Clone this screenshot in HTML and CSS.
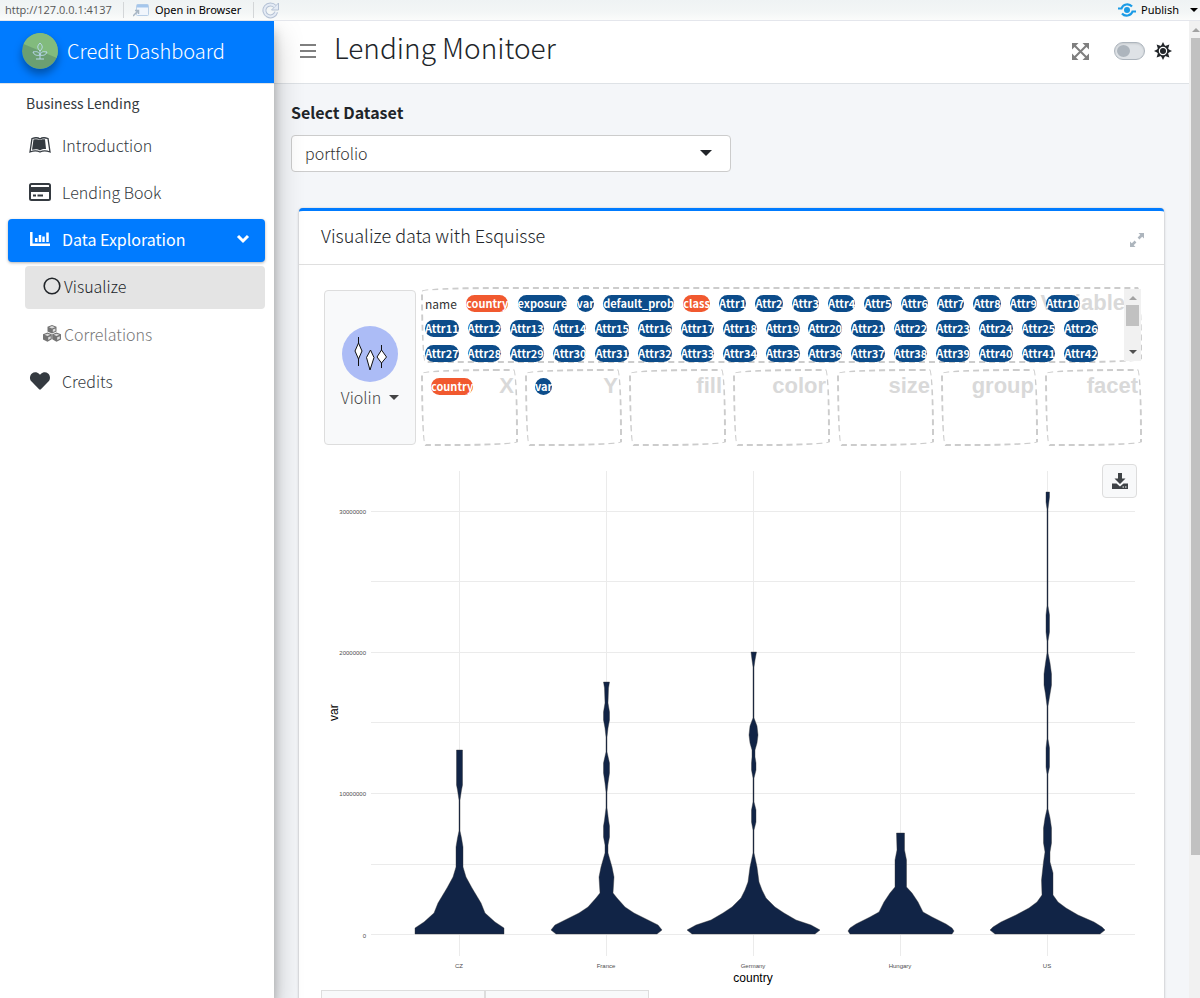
FILE: index.html
```html
<!DOCTYPE html>
<html lang="en">
<head>
<meta charset="utf-8">
<title>Credit Dashboard</title>
<link rel="stylesheet" href="styles.css">
</head>
<body>
<div class="viewer">
  <div class="viewer-bar">
    <span class="viewer-url">http://127.0.0.1:4137</span>
    <button class="viewer-btn viewer-open" type="button">
      <svg width="16" height="13" viewBox="0 0 16 13"><rect x="3.5" y=".5" width="12" height="11" rx="1" fill="#f1f6fc" stroke="#b9cfe6"/><path d="M4 2h11" stroke="#a4c6ec" stroke-width="3"/><path d="M0 12l5-5M2 6.500h3.500V10" fill="none" stroke="#a9b6c2" stroke-width="1.500"/></svg>
      Open in Browser
    </button>
    <button class="viewer-btn viewer-refresh" type="button" aria-label="Refresh">
      <svg width="17" height="17" viewBox="0 0 17 17"><path d="M13 4.500A6 6 0 1 0 14.200 10" fill="none" stroke="#b4c1d4" stroke-width="4"/><path d="M16.500 1v7h-7z" fill="#e4ebf5" stroke="#b4c1d4"/><path d="M13 4.500A6 6 0 1 0 14.200 10" fill="none" stroke="#e4ebf5" stroke-width="2"/></svg>
    </button>
    <button class="viewer-btn viewer-publish" type="button">
      <svg width="18" height="14" viewBox="0 0 18 14" fill="none" stroke="#1a9be6" stroke-width="2.200"><path d="M0 5.500h3.500C5 1 11 0 14 3.500M18 8.500h-3.500C13 13 7 14 4 10.500"/><circle cx="9" cy="7" r="3" fill="#1a9be6" stroke="none"/></svg>
      Publish
      <span class="caret caret-sm"></span>
    </button>
  </div>

  <div class="app">
    <aside class="sidebar">
      <a class="brand" href="#">
        <svg class="brand-logo" width="36" height="36" viewBox="0 0 36 36"><circle cx="18" cy="18" r="18" fill="#6b9f71"/><path d="M1.500 11A18 18 0 0 1 35 25z" fill="#82bb7d"/><g fill="none" stroke="#b9d7ea" stroke-width="1"><path d="M18 10c-3 3-3 5 0 8c3-3 3-5 0-8zM18 18v8M14 26h8M11 19c4-1 6 0 7 3c1-3 3-4 7-3c-1 3-4 4-7 3c-3 1-6 0-7-3z"/></g></svg>
        <span>Credit Dashboard</span>
      </a>
      <div class="nav-header">Business Lending</div>
      <nav class="nav">
        <a class="nav-link" href="#"><svg class="nav-icon" width="22" height="16" viewBox="0 0 22 16"><path d="M3 1.500C6 .5 9 .5 11 2c2-1.500 5-1.500 8-.5L21 15c-4-1.500-7-1.500-10 0c-3-1.500-6-1.500-10 0z" fill="#fff" stroke="#343a40" stroke-width="1.300"/><path d="M4.500 2.500C7 2 9 2 11 3c2-1 3-1 5-.7L17 12c-2-.2-4 0-6 1.500C9 12 6 12 3 12.800z" fill="#343a40"/></svg><span>Introduction</span></a>
        <a class="nav-link" href="#"><svg class="nav-icon" width="22" height="18" viewBox="0 0 22 18"><rect x="1" y="1" width="20" height="16" rx="1.500" fill="#fff" stroke="#343a40" stroke-width="2"/><path d="M1 4h20v5H1z" fill="#343a40"/><path d="M4 12.500h3M8.500 12.500H14" stroke="#343a40" stroke-width="2"/></svg><span>Lending Book</span></a>
        <a class="nav-link active" href="#"><svg class="nav-icon" width="20" height="16" viewBox="0 0 20 16" fill="none" stroke="#fff" stroke-width="2.500"><path d="M1.300 1v12.700H20"/><path d="M6.300 7v4M10 4v7M13.500 5.500V11M17.500 1.500V11"/></svg><span>Data Exploration</span><svg class="nav-chevron" width="14" height="10" viewBox="0 0 14 10"><path d="M2 2l5 5 5-5" fill="none" stroke="#fff" stroke-width="3"/></svg></a>
        <div class="subnav">
          <a class="sub-link current" href="#"><svg width="18" height="18" viewBox="0 0 18 18"><circle cx="9" cy="9" r="7.800" fill="none" stroke="#212529" stroke-width="1.600"/></svg><span>Visualize</span></a>
          <a class="sub-link" href="#"><svg width="18" height="17" viewBox="0 0 18 17"><path fill="#747474" d="M9 0l4.500 1.700v4.800L9 8.600 4.500 6.500V1.700zM4.500 7.500L8.800 9.300v5L4.500 16.700 0 14.500V9.300zM13.500 7.500L18 9.300v5.200l-4.500 2.200-4.300-2.400v-5z"/><path fill="#fff" d="M9 1l3 1.200L9 3.400 6 2.200zM4.500 8.700l2.800 1.100-2.800 1.200-2.900-1.200zM13.500 8.700l2.900 1.100-2.900 1.200-2.800-1.200zM9.800 4.500l2.600-1v2.400L9.800 7zM5.200 12.200l2.500-1v2.300l-2.500 1.400zM14.200 12.200l2.600-1v2.500l-2.600 1.200z" opacity=".75"/></svg><span>Correlations</span></a>
        </div>
        <a class="nav-link" href="#"><svg class="nav-icon" width="20" height="20" viewBox="0 0 512 512"><path fill="#343a40" d="M462.300 62.600C407.500 15.900 326 24.300 275.700 76.200L256 96.500l-19.700-20.300C186.100 24.300 104.500 15.900 49.700 62.600c-62.800 53.600-66.100 149.800-9.900 207.900l193.500 199.800c12.500 12.900 32.800 12.900 45.300 0l193.500-199.800c56.300-58.100 53-154.300-9.800-207.900z"/></svg><span>Credits</span></a>
      </nav>
    </aside>

    <div class="page">
      <header class="topbar">
        <button class="icon-btn" type="button" aria-label="Toggle menu"><svg width="16" height="14" viewBox="0 0 16 14"><path d="M0 1h16M0 7h16M0 13h16" stroke="#7f7f7f" stroke-width="2"/></svg></button>
        <h1>Lending Monitoer</h1>
        <button class="icon-btn push" type="button" aria-label="Full screen"><svg width="17" height="17" viewBox="0 0 17 17" fill="#7f7f7f"><path d="M0 0h6.500L0 6.500zM17 0v6.500L10.500 0zM0 17v-6.500L6.500 17zM17 17h-6.500l6.500-6.500z"/><path d="M2 2l13 13M15 2L2 15" stroke="#7f7f7f" stroke-width="2"/></svg></button>
        <label class="theme"><input class="switch" type="checkbox" aria-label="Dark mode"><svg width="18" height="18" viewBox="0 0 18 18"><g fill="#212529"><path d="M9 0l2 4H7zM9 18l-2-4h4zM0 9l4-2v4zM18 9l-4 2V7zM2.600 2.600l4.300 1.400L4 6.900zM15.400 2.600L14 6.900 11.100 4zM2.600 15.400L4 11.100 6.900 14zM15.400 15.400L11.100 14 14 11.100z"/></g><circle cx="9" cy="9" r="5" fill="none" stroke="#212529" stroke-width="1.600"/><circle cx="9" cy="9" r="3" fill="#212529"/></svg></label>
      </header>

      <main class="content">
        <label class="field-label" for="dataset">Select Dataset</label>
        <div class="select-wrap">
          <select id="dataset"><option>portfolio</option></select>
          <span class="caret"></span>
        </div>

        <section class="card">
          <div class="card-header">
            <h2>Visualize data with Esquisse</h2>
            <button class="icon-btn" type="button" aria-label="Maximize"><svg width="14" height="14" viewBox="0 0 14 14" fill="#adb5bd"><path d="M8.500 0H14v5.500zM0 8.500L5.500 14H0z"/><path d="M12 2L8.500 5.500M5.500 8.500L2 12" stroke="#adb5bd" stroke-width="2.500"/></svg></button>
          </div>
          <div class="card-body">
            <div class="builder">
              <button class="geom" type="button">
                <svg width="56" height="56" viewBox="0 0 56 56"><circle cx="28" cy="28" r="28" fill="#acbcf6"/><g fill="#fff" stroke="#111" stroke-width="1"><path d="M16.500 11v6L13 25l3.500 8v7v-7l3.500-8-3.500-8zM28.500 24l-4 7.500 3.500 12.500 4-12.500zM39.500 19v5L35 31l4.500 6v5v-5l5-6-5-7z"/></g></svg>
                <span class="geom-name">Violin <span class="caret"></span></span>
              </button>
              <div class="zones">
                <div class="zone source">
                  <span class="mark">Variable</span>
                  <div class="pills">
                    <div class="pill-row pill-row-first"><span class="plain">name</span><span class="pill cat">country</span><span class="pill">exposure</span><span class="pill">var</span><span class="pill">default_prob</span><span class="pill cat">class</span><span class="pill">Attr1</span><span class="pill">Attr2</span><span class="pill">Attr3</span><span class="pill">Attr4</span><span class="pill">Attr5</span><span class="pill">Attr6</span><span class="pill">Attr7</span><span class="pill">Attr8</span><span class="pill">Attr9</span><span class="pill">Attr10</span></div>
                    <div class="pill-row"><span class="pill">Attr11</span><span class="pill">Attr12</span><span class="pill">Attr13</span><span class="pill">Attr14</span><span class="pill">Attr15</span><span class="pill">Attr16</span><span class="pill">Attr17</span><span class="pill">Attr18</span><span class="pill">Attr19</span><span class="pill">Attr20</span><span class="pill">Attr21</span><span class="pill">Attr22</span><span class="pill">Attr23</span><span class="pill">Attr24</span><span class="pill">Attr25</span><span class="pill">Attr26</span></div>
                    <div class="pill-row"><span class="pill">Attr27</span><span class="pill">Attr28</span><span class="pill">Attr29</span><span class="pill">Attr30</span><span class="pill">Attr31</span><span class="pill">Attr32</span><span class="pill">Attr33</span><span class="pill">Attr34</span><span class="pill">Attr35</span><span class="pill">Attr36</span><span class="pill">Attr37</span><span class="pill">Attr38</span><span class="pill">Attr39</span><span class="pill">Attr40</span><span class="pill">Attr41</span><span class="pill">Attr42</span></div>
                  </div>
                  <div class="bar bar-inner"><span class="arrow-up"></span><span class="thumb"></span><span class="arrow-down"></span></div>
                </div>
                <div class="targets">
                  <div class="zone"><span class="mark">X</span><span class="pill cat">country</span></div>
                  <div class="zone"><span class="mark">Y</span><span class="pill">var</span></div>
                  <div class="zone"><span class="mark">fill</span></div>
                  <div class="zone"><span class="mark">color</span></div>
                  <div class="zone"><span class="mark">size</span></div>
                  <div class="zone"><span class="mark">group</span></div>
                  <div class="zone"><span class="mark">facet</span></div>
                </div>
              </div>
            </div>

            <div class="plot">
              <button class="download" type="button" aria-label="Download"><svg width="16" height="16" viewBox="0 0 16 16" fill="#3f4347"><path d="M6 0h4v5.500h3.500L8 11 2.500 5.500H6z"/><path d="M0 10.500h4.500L8 13.500l3.500-3H16V16H0z"/><path d="M10.500 14h1.500M13 14h1.500" stroke="#fff"/></svg></button>
              <svg class="chart" viewBox="321 463 821 527" role="img" aria-label="Violin plot of var by country">
                <g class="grid"><path d="M371 511.500H1135M371 652.500H1135M371 793.500H1135M371 934.500H1135M459.500 471V956M606.500 471V956M753.500 471V956M900.500 471V956M1047.500 471V956"/><path d="M371 581.500H1135M371 722.500H1135M371 864.500H1135"/></g>
                <g class="violins">
                  <path d="M456.500 750H462.500V785L461.500 790L460 800V831L461.500 838L463 847V867L466 877L472 888L481 903L485 913L495 922L504 928V934H415V928L424 922L434 913L438 903L447 888L453 877L456 867V847L457.500 838L459 831V800L457.500 790L456.500 785Z"/>
                  <path d="M603.500 682H609.500L608.500 688L608 703L609.500 712V720L608 728L607 737V752L609.500 763V773L608 783L607 792V808L608.500 820L609.500 826V837L608 845V853L612 867L614 877L613 893L617 898L625 907L634 913L648 920L658 925L662 930L657 934H556L551 930L555 925L565 920L579 913L588 907L596 898L600 893L599 877L601 867L605 853V845L603.500 837V826L604.500 820L606 808V792L605 783L603.500 773V763L606 752V737L605 728L603.500 720V712L605 703L604.500 688Z"/>
                  <path d="M751 652H756.500L755 660L754 667V718L757 726L758 735L757 743L755 750V757L756 763V770L754 778V802L756 810V822L754 830V853L757 867L759 882L762 890L766 898L775 907L784 913L796 920L811 925L820 930L815 934H692L687 930L696 925L711 920L723 913L732 907L741 898L745 890L748 882L750 867L753 853V830L751.500 822V810L753 802V778L751.500 770V763L752 757V750L750 743L749 735L750 726L753 718V667L752 660Z"/>
                  <path d="M896.500 833H904.500V850L906.500 860V887L912 893L918 902L923 912L932 917L946 924L952 928L954 931L952 934H850L848 931L850 928L856 924L870 917L879 912L884 902L890 893L895 887V860L897 850Z"/>
                  <path d="M1046 492H1049.500V497L1048 509V606L1049.500 615V632L1048 641V653L1050 663L1051.500 674V685L1050 694L1048 706V739L1049.500 748V767L1048 774V809L1050 818L1051.500 828V843L1050 852V862L1053 873V895L1058 902L1066 908L1078 915L1094 922L1102 927L1105 930L1100 934H995L990 930L993 927L1001 922L1016 915L1029 908L1037 902L1042 895L1041.500 880L1043.500 862L1045 852L1043.500 843V828L1045 818L1047 809V774L1046 767V748L1047 739V706L1045.500 694L1044 685V674L1045.500 663L1047 653V641L1046 632V615L1047 606V509L1046 502Z"/>
                </g>
                <g class="ticks ticks-y"><text x="366" y="514">30000000</text><text x="366" y="655">20000000</text><text x="366" y="796">10000000</text><text x="366" y="938">0</text></g>
                <g class="ticks ticks-x"><text x="459" y="968">CZ</text><text x="606" y="968">France</text><text x="753" y="968">Germany</text><text x="900" y="968">Hungary</text><text x="1047" y="968">US</text></g>
                <text class="axis" x="753" y="982">country</text>
                <text class="axis" transform="translate(338 721) rotate(-90)">var</text>
              </svg>
            </div>
            <div class="tools"><button type="button" aria-label="Labels and title"></button><button type="button" aria-label="Plot options"></button></div>
          </div>
        </section>
      </main>
    </div>
    <div class="bar bar-page"><span class="arrow-up"></span><span class="thumb"></span></div>
  </div>
</div>
</body>
</html>
```

FILE: styles.css
```css
* { box-sizing: border-box; }

body {
  margin: 0;
  color: #212529;
  font-family: "Noto Sans CJK SC", "Noto Sans", sans-serif;
  font-size: 16px;
  font-weight: 300;
  line-height: 24px;
}

button { padding: 0; border: 0; background: none; color: inherit; font: inherit; }
svg { display: block; flex: none; }
a { color: inherit; text-decoration: none; }

.viewer { display: flex; flex-direction: column; height: 100vh; overflow: hidden; }

.viewer-bar {
  display: flex;
  flex: none;
  align-items: center;
  height: 21px;
  padding-left: 5px;
  border-bottom: 1px solid #e4e6ec;
  background: linear-gradient(#eff3f4, #f3f6f6 60%, #fbfcfb);
  font: 12px/20px "Noto Sans", sans-serif;
}
.viewer-url { width: 119px; border-right: 1px solid #d3d6d8; line-height: 16px; color: #555; font-family: "Open Sans", sans-serif; font-size: 11px; }
.viewer-btn { display: flex; align-items: center; gap: 6px; color: #000; }
.viewer-open { padding: 0 12px 0 9px; border-right: 1px solid #d3d6d8; line-height: 16px; font-size: 11px; }
.viewer-refresh { padding-left: 8px; }
.viewer-publish { margin-left: auto; gap: 5px; font-size: 11px; }
.viewer-publish .caret { margin: 0 2px 0 6px; }

.app { display: grid; flex: 1; grid-template-columns: 274px minmax(0, 1fr) 11px; min-height: 0; }

.sidebar { z-index: 2; background: #fff; color: #343a40; box-shadow: 0 14px 28px rgba(0,0,0,.25), 0 10px 10px rgba(0,0,0,.22); clip-path: inset(0 -30px 0 0); }
.brand { display: flex; align-items: center; gap: 9px; height: 62px; padding: 0 22px 3px; background: #007bff; color: #fff; font-size: 20px; }
.brand-logo { border-radius: 50%; box-shadow: 0 5px 8px rgba(0,0,0,.35); }
.nav-header { padding: 7px 26px 0; font-size: 14px; font-weight: 400; border-top: 1px solid #dee2e6; }
.nav { display: flex; flex-direction: column; gap: 4px; padding: 10px 9px 0 8px; }
.nav-link { display: flex; align-items: center; height: 43px; padding: 0 15px 4px 21px; border-radius: 4px; }
.nav-icon { width: 22px; margin-right: 11px; }
.nav-link.active { background: #007bff; color: #fff; font-weight: 400; box-shadow: 0 1px 3px rgba(0,0,0,.3); }
.nav-chevron { margin-left: auto; }
.subnav { display: flex; flex-direction: column; gap: 5px; padding-left: 17px; }
.sub-link { display: flex; align-items: center; gap: 3px; height: 43px; padding: 0 0 4px 18px; border-radius: 4px; color: #777; }
.sub-link.current { background: #e4e4e4; color: #212529; }

.page { overflow: hidden; background: #f4f6f9; }
.topbar { display: flex; align-items: center; height: 63px; padding: 0 17px 2px 26px; border-bottom: 1px solid #dee2e6; background: #fff; }
.topbar h1 { margin: 0 0 8px 18px; font-size: 28px; font-weight: 300; line-height: 36px; }
.push { margin-left: auto; }
.theme { display: flex; align-items: center; gap: 9px; margin-left: 25px; }
.switch { appearance: none; width: 31px; height: 18px; margin: 0; padding: 2px; border: 1px solid #adb5bd; border-radius: 9px; background: #dee2e6; box-shadow: inset 0 1px 2px rgba(0,0,0,.1); }
.switch::before { content: ""; display: block; width: 13px; height: 12px; border-radius: 50%; background: #adb5bd; }

.content { padding: 16px 25px 0 17px; }
.field-label { display: block; margin-bottom: 11px; font-weight: 700; }
.select-wrap { position: relative; width: 440px; max-width: 100%; }
.select-wrap select { appearance: none; display: block; width: 100%; height: 37px; padding: 0 13px 2px; border: 1px solid #ccc; border-radius: 4px; background: #fff; color: #333; font: inherit; }
.select-wrap .caret { position: absolute; right: 19px; top: 15px; }
.caret { display: inline-block; border: 6px solid transparent; border-top-color: currentColor; border-bottom: 0; }
.caret-sm { border-width: 4px; border-bottom: 0; }

.card { margin: 36px 0 0 8px; border-top: 3px solid #007bff; border-radius: 4px; background: #fff; box-shadow: 0 0 1px rgba(0,0,0,.2), 0 1px 3px rgba(0,0,0,.25); }
.card-header { display: flex; align-items: center; justify-content: space-between; height: 54px; padding: 0 20px 0 22px; border-bottom: 1px solid #dfdfdf; }
.card-header h2 { margin: 0 0 6px; font-size: 18px; font-weight: 300; }
.card-header .icon-btn { padding-top: 4px; }
.card-body { padding: 22px; }

.builder { display: grid; grid-template-columns: 92px minmax(0, 1fr); gap: 5px; padding-left: 3px; }
.geom { display: flex; flex-direction: column; align-items: center; justify-content: center; gap: 3px; margin: 3px 0 1px; border: 1px solid #ddd; border-radius: 4px; background: #f8f9fa; color: #444; }
.geom-name { display: flex; align-items: center; gap: 8px; }
.geom .caret { border-width: 5px; border-bottom: 0; }

.zones { display: grid; gap: 6px; }
.zone { position: relative; height: 77px; padding: 6px 8px; border: 2px dashed #ccc; border-radius: 255px 15px 225px 15px / 15px 225px 15px 255px; font: 700 12px/17px "Noto Sans CJK SC", sans-serif; }
.zone.source { height: 76px; padding: 0; }
.targets { display: grid; grid-template-columns: repeat(7, minmax(0, 1fr)); gap: 7px; }
.mark { position: absolute; top: 2px; right: 2px; color: #d9d9d9; font: 700 22px/26px "Liberation Sans", Arial, sans-serif; }
.source .mark { right: 15px; top: 1px; }
.pills { position: relative; display: grid; gap: 8px; padding: 6px 42px 0 2px; }
.pill-row { display: flex; justify-content: space-between; height: 17px; }
.pill-row-first { padding-right: 18px; }
.pill { display: inline-block; border-radius: 9px; background: #0c4c8a; color: #fff; font-size: 11px; }
.pill.cat { background: #f1592f; }
.plain { color: #333; font-weight: 400; }

.bar { position: relative; display: flex; flex-direction: column; align-items: center; background: #f1f1f1; }
.bar .thumb { background: #c1c1c1; }
.arrow-up { border: 4px solid transparent; border-top: 0; border-bottom-color: #a3a3a3; }
.arrow-down { margin-top: auto; border: 4px solid transparent; border-bottom: 0; border-top-color: #505050; }
.bar-page { padding: 7px 0 0 2px; }
.bar-page .thumb { width: 100%; height: 817px; margin-top: 6px; }
.bar-inner { position: absolute; inset: 0 -1px 0 auto; width: 17px; padding: 7px 0; }
.bar-inner .thumb { width: 13px; height: 21px; margin-top: 5px; }

.plot { position: relative; margin-top: 17px; }
.chart { width: 100%; height: auto; font-family: "Liberation Sans", Arial, sans-serif; }
.grid { stroke: #ebebeb; fill: none; shape-rendering: crispEdges; }
.violins { fill: #112446; stroke: #333; stroke-width: .4; }
.ticks { fill: #4d4d4d; font-size: 6px; font-weight: 400; }
.ticks-y { text-anchor: end; }
.ticks-x { text-anchor: middle; }
.axis { fill: #000; font-size: 12px; font-weight: 400; }
.axis[x] { text-anchor: middle; }
.download { position: absolute; top: 1px; right: 5px; display: grid; place-items: center; width: 35px; height: 34px; border: 1px solid #ddd; border-radius: 4px; background: #f8f9fa; }

.tools { display: grid; grid-template-columns: 1fr 1fr; width: 40%; }
.tools button { height: 38px; border: 1px solid #ddd; background: #f8f9fa; }
```
